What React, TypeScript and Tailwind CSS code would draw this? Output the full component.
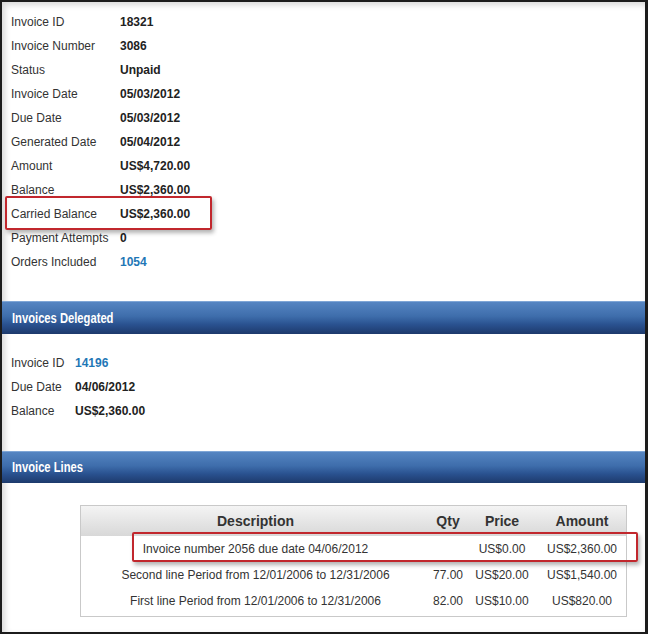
const invoiceFields = [
  { label: "Invoice ID", value: "18321" },
  { label: "Invoice Number", value: "3086" },
  { label: "Status", value: "Unpaid" },
  { label: "Invoice Date", value: "05/03/2012" },
  { label: "Due Date", value: "05/03/2012" },
  { label: "Generated Date", value: "05/04/2012" },
  { label: "Amount", value: "US$4,720.00" },
  { label: "Balance", value: "US$2,360.00" },
  { label: "Carried Balance", value: "US$2,360.00" },
  { label: "Payment Attempts", value: "0" },
  { label: "Orders Included", value: "1054", link: true },
]

const delegatedFields = [
  { label: "Invoice ID", value: "14196", link: true },
  { label: "Due Date", value: "04/06/2012" },
  { label: "Balance", value: "US$2,360.00" },
]

const lines = [
  { description: "Invoice number 2056 due date 04/06/2012", qty: "", price: "US$0.00", amount: "US$2,360.00" },
  { description: "Second line Period from 12/01/2006 to 12/31/2006", qty: "77.00", price: "US$20.00", amount: "US$1,540.00" },
  { description: "First line Period from 12/01/2006 to 12/31/2006", qty: "82.00", price: "US$10.00", amount: "US$820.00" },
]

type Field = { label: string; value: string; link?: boolean }

function FieldRow({ field, labelWidth }: { field: Field; labelWidth: string }) {
  return (
    <div className="flex h-6 items-center text-[12px] leading-none">
      <span className={`${labelWidth} shrink-0 text-[#333]`}>{field.label}</span>
      <span className={`font-bold ${field.link ? "text-[#1e77b6]" : "text-[#222]"}`}>
        {field.value}
      </span>
    </div>
  )
}

function SectionBar({ title, height }: { title: string; height: string }) {
  return (
    <div
      className={`${height} flex items-center border-t border-[#7fa6d6] bg-[linear-gradient(to_bottom,#5585c2_0%,#3e6dab_45%,#2a5290_70%,#1d3a6c_100%)] pl-[10px]`}
    >
      {/* the original uses a narrow bold face; squeeze the regular one */}
      <span className="inline-block origin-left scale-x-[0.8] whitespace-nowrap text-[14px] font-bold text-white">
        {title}
      </span>
    </div>
  )
}

function RedMark({ className }: { className: string }) {
  return (
    <div
      className={`pointer-events-none absolute rounded-[2px] border-2 border-[#c1272d] shadow-[2px_3px_4px_rgba(0,0,0,0.3)] ${className}`}
    />
  )
}

export default function App() {
  return (
    <div className="h-[636px] w-[652px] bg-white font-['Liberation_Sans',Arial,sans-serif]">
      <div className="relative h-[634px] w-[648px] border-2 border-r-[3px] border-[#1b1b1b] bg-white shadow-[inset_3px_3px_6px_rgba(0,0,0,0.16)]">
        {/* Invoice details */}
        <div className="pb-[27px] pl-[9px] pt-2">
          {invoiceFields.map((f) => (
            <FieldRow key={f.label} field={f} labelWidth="w-[109px]" />
          ))}
        </div>

        <SectionBar title="Invoices Delegated" height="h-[33px]" />

        <div className="pb-[28px] pl-[9px] pt-[17px]">
          {delegatedFields.map((f) => (
            <FieldRow key={f.label} field={f} labelWidth="w-[64px]" />
          ))}
        </div>

        <SectionBar title="Invoice Lines" height="h-[32px]" />

        {/* Invoice lines table */}
        <div className="ml-[78px] mt-[22px] w-[547px] border border-[#c9c9c9] pb-[2px] text-[12px] text-[#333]">
          <div className="grid h-[30px] grid-cols-[349px_36px_72px_88px] items-center bg-linear-to-b from-[#f4f4f4] to-[#d8d8d8] text-[14px] font-bold">
            <span className="text-center">Description</span>
            <span className="text-center">Qty</span>
            <span className="text-center">Price</span>
            <span className="text-center">Amount</span>
          </div>
          {lines.map((l) => (
            <div key={l.description} className="grid h-[26px] grid-cols-[349px_36px_72px_88px] items-center">
              <span className="text-center">{l.description}</span>
              <span className="text-center">{l.qty}</span>
              <span className="text-center">{l.price}</span>
              <span className="text-center">{l.amount}</span>
            </div>
          ))}
        </div>

        <RedMark className="left-[3px] top-[194px] h-[34px] w-[207px]" />
        <RedMark className="left-[130px] top-[530px] h-[30px] w-[506px]" />
      </div>
    </div>
  )
}
